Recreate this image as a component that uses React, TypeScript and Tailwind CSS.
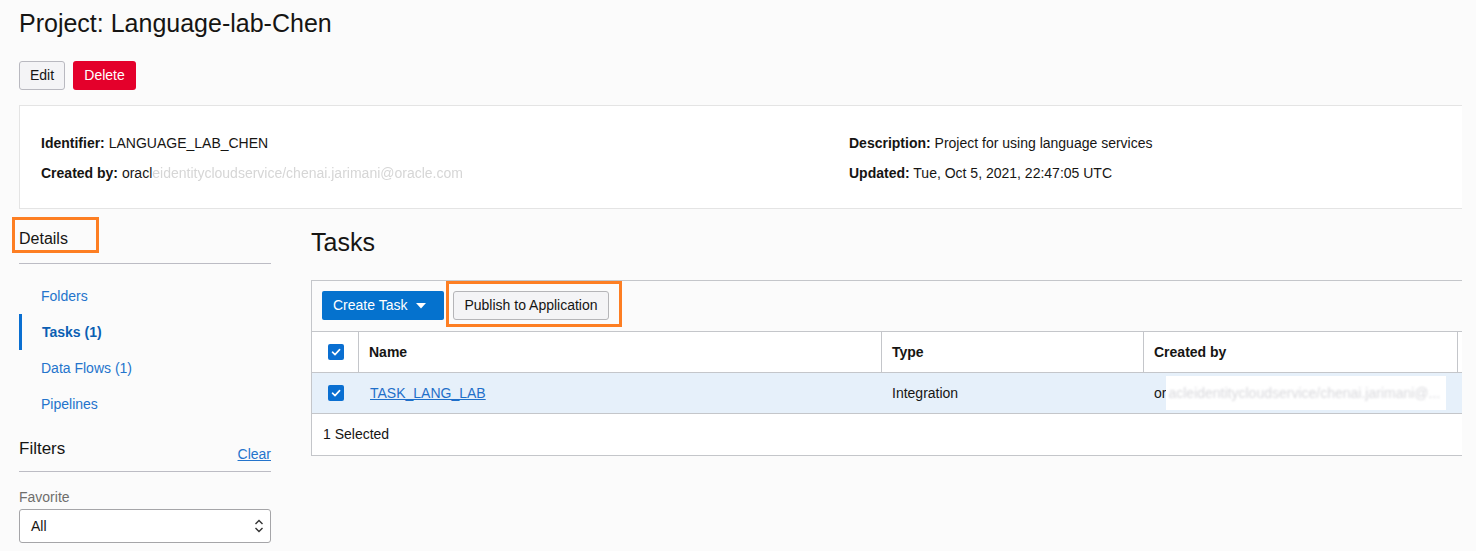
import React from 'react';

const font = { fontFamily: '"Liberation Sans", Arial, sans-serif' };

function Check() {
  return (
    <span className="flex h-[16px] w-[16px] items-center justify-center rounded-[2px] bg-[#0a6fd1]">
      <svg width="12" height="12" viewBox="0 0 12 12" fill="none">
        <path d="M2.5 6.2 L5 8.6 L9.6 3.6" stroke="white" strokeWidth="1.6" strokeLinecap="round" strokeLinejoin="round" />
      </svg>
    </span>
  );
}

const navItems = [
  { label: 'Folders', active: false },
  { label: 'Tasks (1)', active: true },
  { label: 'Data Flows (1)', active: false },
  { label: 'Pipelines', active: false },
];

export default function App() {
  return (
    <div className="h-[551px] w-[1476px] overflow-hidden bg-[#fbfbfb] text-[#161513]" style={font}>
      <div className="w-[1462px] pl-[19px]">
        {/* header */}
        <h1 className="pt-[9px] text-[25px] leading-[28px] font-normal">Project: Language-lab-Chen</h1>
        <div className="mt-[24px] flex gap-[8px]">
          <button className="h-[29px] w-[46px] rounded-[3px] border border-[#b9b9c0] bg-[#f4f4f6] text-[14px] text-[#161513]">
            Edit
          </button>
          <button className="h-[29px] w-[63px] rounded-[3px] bg-[#e4002b] text-[14px] text-white">Delete</button>
        </div>

        {/* info panel */}
        <div className="mt-[15px] flex h-[104px] border-y border-l border-[#e4e4e4] bg-white pt-[27px] pl-[21px] text-[14px] leading-[20px]">
          <div className="flex w-[808px] flex-col gap-[10px]">
            <div>
              <span className="font-bold">Identifier:</span> LANGUAGE_LAB_CHEN
            </div>
            <div>
              <span className="font-bold">Created by:</span> oracl
              <span className="text-[#d6d6d6] blur-[0.6px]">eidentitycloudservice/chenai.jarimani@oracle.com</span>
            </div>
          </div>
          <div className="flex flex-col gap-[10px]">
            <div>
              <span className="font-bold">Description:</span> Project for using language services
            </div>
            <div>
              <span className="font-bold">Updated:</span> Tue, Oct 5, 2021, 22:47:05 UTC
            </div>
          </div>
        </div>

        <div className="flex gap-[40px]">
          {/* sidebar */}
          <aside className="w-[252px] shrink-0">
            <div className="border-b border-[#bcbcc4] pt-[20px] pb-[14px]">
              <div className="relative text-[16px] leading-[20px]">
                Details
                <span className="absolute top-[-12px] left-[-7px] h-[36px] w-[87px] border-[3px] border-[#fd7e23]" />
              </div>
            </div>
            <nav className="mt-[14px] flex flex-col">
              {navItems.map((item) => (
                <a
                  key={item.label}
                  className={
                    item.active
                      ? 'flex h-[36px] items-center border-l-[3px] border-[#0a6fd1] pl-[20px] text-[14px] font-bold text-[#0b5fb3]'
                      : 'flex h-[36px] items-center pl-[22px] text-[14px] text-[#2474cc]'
                  }
                >
                  {item.label}
                </a>
              ))}
            </nav>
            <div className="mt-[16px] flex items-end justify-between border-b border-[#bcbcc4] pb-[11px]">
              <span className="text-[17px] leading-[22px]">Filters</span>
              <a className="mb-[-3px] text-[14px] leading-[18px] text-[#2474cc] underline">Clear</a>
            </div>
            <div className="mt-[16px] text-[14px] leading-[18px] text-[#6f6e6c]">Favorite</div>
            <div className="mt-[3px] flex h-[34px] items-center justify-between rounded-[3px] border border-[#a5a5a8] bg-white pr-[6px] pl-[11px] text-[14px]">
              <span>All</span>
              <svg width="10" height="16" viewBox="0 0 10 16" fill="none">
                <path d="M1.5 6 L5 2.5 L8.5 6" stroke="#333" strokeWidth="1.4" />
                <path d="M1.5 10 L5 13.5 L8.5 10" stroke="#333" strokeWidth="1.4" />
              </svg>
            </div>
          </aside>

          {/* main */}
          <main className="flex-1">
            <h2 className="pt-[19px] text-[25px] leading-[28px] font-normal">Tasks</h2>
            <div className="mt-[24px] border-y border-l border-[#c4c6ca] bg-white text-[14px]">
              <div className="flex h-[50px] items-start gap-[9px] bg-[#fbfbfb] pt-[10px] pl-[10px]">
                <button className="flex h-[29px] w-[122px] items-center rounded-[2px] bg-[#0572ce] pl-[11px] text-white">
                  Create Task
                  <svg className="ml-[9px]" width="10" height="6" viewBox="0 0 10 6">
                    <path d="M0 0 H10 L5 5.5 Z" fill="white" />
                  </svg>
                </button>
                <div className="relative">
                  <button className="h-[29px] w-[156px] rounded-[3px] border border-[#b5b5b8] bg-[#f4f4f6] text-[#161513]">
                    Publish to Application
                  </button>
                  <span className="absolute top-[-10px] right-[-13px] bottom-[-7px] left-[-7px] border-[3px] border-[#fd7e23]" />
                </div>
              </div>
              {/* header row */}
              <div className="flex h-[41px] items-center border-t border-[#c4c6ca] font-bold">
                <div className="flex h-full w-[47px] items-center border-r border-[#c4c6ca] pl-[16px]">
                  <Check />
                </div>
                <div className="flex h-full w-[523px] items-center border-r border-[#c4c6ca] pl-[10px]">Name</div>
                <div className="flex h-full w-[262px] items-center border-r border-[#c4c6ca] pl-[10px]">Type</div>
                <div className="flex h-full w-[314px] items-center border-r border-[#c4c6ca] pl-[10px]">Created by</div>
              </div>
              {/* data row */}
              <div className="flex h-[41px] items-center border-t border-[#c4c6ca] bg-[#e6f0fa]">
                <div className="flex w-[47px] items-center pl-[16px]">
                  <Check />
                </div>
                <div className="w-[523px] pl-[11px]">
                  <a className="text-[#1f6fc9] underline">TASK_LANG_LAB</a>
                </div>
                <div className="w-[262px] pl-[10px]">Integration</div>
                <div className="flex w-[314px] items-center pl-[10px]">
                  <span>or</span>
                  <span className="flex h-[34px] w-[280px] items-center bg-white pl-[2px] text-[#d8d8dc]">
                    <span className="blur-[0.8px]">acleidentitycloudservice/chenai.jarimani@...</span>
                  </span>
                </div>
              </div>
              {/* footer */}
              <div className="flex h-[42px] items-center border-t border-[#c4c6ca] pl-[11px]">1 Selected</div>
            </div>
          </main>
        </div>
      </div>
    </div>
  );
}
